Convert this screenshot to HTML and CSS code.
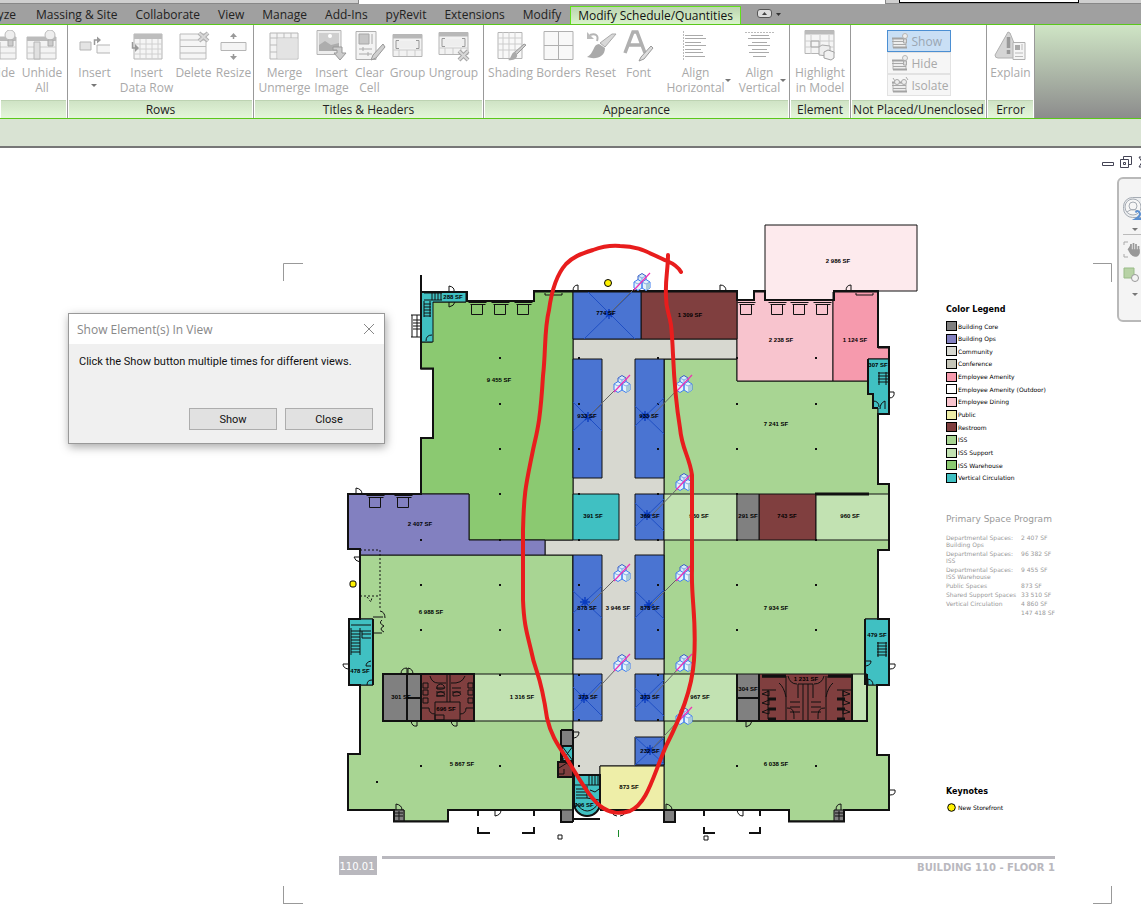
FILE: index.html
```html
<!DOCTYPE html>
<html lang="en">
<head>
<meta charset="utf-8">
<meta name="viewport" content="width=device-width, initial-scale=1">
<title>Modify Schedule/Quantities</title>
<link rel="stylesheet" href="styles.css">
</head>
<body>
<div class="app">
  <header class="ribbon">
    <div class="titlebar"><span class="title-left"></span><span class="title-mid"></span><span class="title-right"><input class="search" type="text" aria-label="Search"></span></div>
    <nav class="tabs">
      <a class="tab tab-cut" href="#">Analyze</a>
      <a class="tab" href="#">Massing &amp; Site</a>
      <a class="tab" href="#">Collaborate</a>
      <a class="tab" href="#">View</a>
      <a class="tab" href="#">Manage</a>
      <a class="tab" href="#">Add-Ins</a>
      <a class="tab" href="#">pyRevit</a>
      <a class="tab" href="#">Extensions</a>
      <a class="tab" href="#">Modify</a>
      <a class="tab active" href="#">Modify Schedule/Quantities</a>
      <button class="collapse" type="button" aria-label="Minimize ribbon">
        <svg width="26" height="10" viewBox="0 0 26 10"><rect x=".5" y=".5" width="14" height="8" rx="2.5" fill="#ddd" stroke="#555"/><path d="M5 6l2.500-3 2.500 3z" fill="#444"/><path d="M19 4h5l-2.500 3z" fill="#333"/></svg>
      </button>
    </nav>
    <div class="panels">
      <section class="panel p-columns">
        <div class="tools">
          <button class="tool" type="button"><svg class="ico" viewBox="0 0 32 32"><use href="#i-unhide"/></svg><span>Hide</span></button>
          <button class="tool" type="button"><svg class="ico" viewBox="0 0 32 32"><use href="#i-unhide"/></svg><span>Unhide<br>All</span></button>
        </div>
        <h2>&nbsp;</h2>
      </section>
      <section class="panel p-rows">
        <div class="tools">
          <button class="tool" type="button"><svg class="ico" viewBox="0 0 32 32"><path d="M1 12h11v8H1z" fill="#e4e4e4" stroke="#b5b5b5"/><path d="M31 15H18v8h13" fill="#f6f6f6" stroke="#b5b5b5"/><path d="M15.500 15v-5h4" fill="none" stroke="#999" stroke-width="1.500"/><path d="M18 6.500l4 3.500-4 3.500z" fill="#999"/></svg><span>Insert<i class="caret"></i></span></button>
          <button class="tool" type="button"><svg class="ico" viewBox="0 0 32 32"><path d="M3 4h28v25H3z" fill="#f5f5f5" stroke="#b5b5b5"/><path d="M3 4h28v5H3z" fill="#bdbdbd"/><path d="M9 9v20M15 9v20M21 9v20M27 9v20M3 14h28M3 19h28M3 24h28" stroke="#d0d0d0"/><path d="M1.500 12v6H5" fill="none" stroke="#999" stroke-width="1.500"/><path d="M4 14l4 4-4 4z" fill="#999"/></svg><span>Insert<br>Data Row</span></button>
          <button class="tool" type="button"><svg class="ico" viewBox="0 0 32 32"><path d="M2 4h26v25H2z" fill="#f5f5f5" stroke="#bbb"/><path d="M2 10h26M2 16.500h26M2 23h26" stroke="#bbb"/><path d="M21 3l9 8M30 3l-9 8" stroke="#b0b0b0" stroke-width="4"/><path d="M21 3l9 8M30 3l-9 8" stroke="#d8d8d8" stroke-width="2"/></svg><span>Delete</span></button>
          <button class="tool" type="button"><svg class="ico" viewBox="0 0 32 32"><path d="M3 12.500h25v8H3z" fill="#f4f4f4" stroke="#b5b5b5"/><path d="M15.500 9V5M15.500 24v4" stroke="#999" stroke-width="1.500"/><path d="M12 7l3.500-4L19 7zM12 26l3.500 4 3.500-4z" fill="#999"/></svg><span>Resize</span></button>
        </div>
        <h2>Rows</h2>
      </section>
      <section class="panel p-titles">
        <div class="tools">
          <button class="tool" type="button"><svg class="ico" viewBox="0 0 32 32"><path d="M1 3h28v26H1z" fill="#f3f3f3" stroke="#b5b5b5"/><path d="M8 3v26M1 8h28M15 3v5M22 3v5M1 15h7M1 22h7" stroke="#bbb"/><path d="M8.500 8.500h20v20h-20z" fill="#e3e3e3"/></svg><span>Merge<br>Unmerge</span></button>
          <button class="tool" type="button"><svg class="ico" viewBox="0 0 32 32"><path d="M1 .5h24v24H1z" fill="#eee" stroke="#b5b5b5"/><path d="M3 3h20v12H3z" fill="#cfcfcf"/><circle cx="14" cy="6" r="2" fill="#fff"/><path d="M3 15l6-4 6 4 8-2v8H3z" fill="#adadad"/><path d="M17 17h9v6h4l-6 7-6-7h3v-3h-4z" fill="#ccc" stroke="#999"/></svg><span>Insert<br>Image</span></button>
          <button class="tool" type="button"><svg class="ico" viewBox="0 0 32 32"><path d="M2 1.500h20v28H2z" fill="#f3f3f3" stroke="#b0b0b0"/><path d="M5 4h10v10H5z" fill="#c6c6c6" stroke="#a8a8a8"/><path d="M18 4v10M5 19h13M5 24h13M9 17v4M14 22v4" stroke="#aaa"/><path d="M29 14l-10 11-2 5 5-2 9-11z" fill="#d0d0d0" stroke="#999"/></svg><span>Clear<br>Cell</span></button>
          <button class="tool" type="button"><svg class="ico" viewBox="0 0 32 32"><use href="#i-group"/></svg><span>Group</span></button>
          <button class="tool" type="button"><svg class="ico" viewBox="0 0 32 32"><use href="#i-group" transform="translate(0 -2)"/><path d="M21 21l9 9M30 21l-9 9" stroke="#a5a5a5" stroke-width="4"/><path d="M21 21l9 9M30 21l-9 9" stroke="#d8d8d8" stroke-width="2"/></svg><span>Ungroup</span></button>
        </div>
        <h2>Titles &amp; Headers</h2>
      </section>
      <section class="panel p-look">
        <div class="tools">
          <button class="tool" type="button"><svg class="ico" viewBox="0 0 32 32"><path d="M3 2.500h24v26H3z" fill="#f8f8f8" stroke="#b5b5b5"/><path d="M8 2v26M14 2v26M20 2v26M3 8h24M3 14h24M3 20h24" stroke="#ccc"/><path d="M31 15L21 25l-2-2 10-9z" fill="#ccc" stroke="#999"/><path d="M20 22c-4 0-3 6-7 8 6 1 10-2 9-6z" fill="#aaa"/></svg><span>Shading</span></button>
          <button class="tool" type="button"><svg class="ico" viewBox="0 0 32 32"><path d="M1 1.500h29v28H1zM15.500 1.500v28M1 15.500h29" fill="#f8f8f8" stroke="#b0b0b0"/></svg><span>Borders</span></button>
          <button class="tool" type="button"><svg class="ico" viewBox="0 0 32 32"><path d="M31 4L20 17l-5-4L27 4z" fill="#d8d8d8" stroke="#aaa"/><path d="M14 14c-6 0-5 10-12 13 9 3 18 0 18-9z" fill="#aaa"/><path d="M5 5c5-2 9 0 7 6" fill="none" stroke="#b5b5b5" stroke-width="2"/><path d="M2 2v7h7z" fill="#bbb"/></svg><span>Reset</span></button>
          <button class="tool" type="button"><svg class="ico" viewBox="0 0 32 32"><path d="M2 23L10 2h4l8 21M6 15h12" fill="none" stroke="#b0b0b0" stroke-width="3.500"/><path d="M28 16L18 27l-2 4 5-2 9-11z" fill="#ddd" stroke="#999"/></svg><span>Font</span></button>
          <button class="tool" type="button"><svg class="ico" viewBox="0 0 32 32"><path d="M3.500 1v29" stroke="#bbb" stroke-dasharray="2 1"/><path d="M5 5.500h18M5 8.500h21M5 12.500h16M5 15.500h21M5 19.500h16M5 22.500h18M5 26.500h20" stroke="#aaa"/></svg><span>Align<br>Horizontal<i class="caret side"></i></span></button>
          <button class="tool" type="button"><svg class="ico" viewBox="0 0 32 32"><path d="M1 2.500h29" stroke="#bbb" stroke-dasharray="2 1"/><path d="M7 5.500h18M4 8.500h22M8 12.500h15M4 15.500h22M8 19.500h15M5 22.500h20M9 26.500h13" stroke="#aaa"/></svg><span>Align<br>Vertical<i class="caret side"></i></span></button>
        </div>
        <h2>Appearance</h2>
      </section>
      <section class="panel p-element">
        <div class="tools">
          <button class="tool" type="button"><svg class="ico" viewBox="0 0 32 32"><path d="M1 .5h29v23H1z" fill="#f5f5f5" stroke="#b5b5b5"/><path d="M1 .5h29v4H1z" fill="#bbb"/><path d="M7 5v19M16 5v19M25 5v19M1 11h29M1 17h29" stroke="#ccc"/><path d="M7 11h8v6H7z" fill="none" stroke="#aaa"/><path d="M15 17l3-2 8 1v8l-3 2-8-1z" fill="#eee" stroke="#aaa"/><path d="M20 22l4-2 6 2v6l-3 2-7-2z" fill="#f2f2f2" stroke="#a0a0a0"/></svg><span>Highlight<br>in Model</span></button>
        </div>
        <h2>Element</h2>
      </section>
      <section class="panel p-placed">
        <div class="stack">
          <button class="mini on" type="button"><svg width="18" height="16" viewBox="0 0 18 16"><use href="#i-mini"/><use href="#i-bulb"/></svg>Show</button>
          <button class="mini" type="button"><svg width="18" height="16" viewBox="0 0 18 16"><use href="#i-mini"/><use href="#i-bulb"/></svg>Hide</button>
          <button class="mini" type="button"><svg width="18" height="16" viewBox="0 0 18 16"><use href="#i-mini"/><path d="M2 1l2 3M15 0l2 3" stroke="#aaa"/><circle cx="6" cy="5" r="2.500" fill="#eee" stroke="#aaa"/><circle cx="13" cy="5" r="2.500" fill="#eee" stroke="#aaa"/></svg>Isolate</button>
        </div>
        <h2>Not Placed/Unenclosed</h2>
      </section>
      <section class="panel p-error">
        <div class="tools">
          <button class="tool" type="button"><svg class="ico" viewBox="0 0 32 32"><path d="M14 2L1 25q0 3 3 3h22L16 3z" fill="#d5d5d5" stroke="#b0b0b0"/><path d="M14.500 7v11M14.500 20v4" stroke="#999" stroke-width="3.500"/><path d="M19 12.500h12v17H19z" fill="#f5f5f5" stroke="#b0b0b0"/><path d="M21 15h5v5h-5z" fill="#aaa"/><path d="M28 14v6M21 23h8M21 26.500h8" stroke="#bbb"/></svg><span>Explain</span></button>
        </div>
        <h2>Error</h2>
      </section>
    </div>
    <div class="options"></div>
  </header>

  <main class="canvas">
    <svg class="plan" width="1141" height="765" viewBox="0 148 1141 765" role="img" aria-label="Building 110 floor 1 plan">
      <defs>
        <g id="i-unhide"><path d="M1 7h29v22H1z" fill="#f3f3f3" stroke="#bbb"/><path d="M1 7h29v4H1z" fill="#bbb"/><path d="M1 17h29M1 23h29" stroke="#ccc"/><path d="M8 12h6v17H8z" fill="#e0e0e0" stroke="#b5b5b5"/><circle cx="24" cy="5" r="5" fill="#eee" stroke="#bbb"/><path d="M22 10h5v6h-5z" fill="#ccc" stroke="#aaa"/></g>
        <g id="i-group"><path d="M1 4.500h29v22H1z" fill="#f2f2f2" stroke="#b5b5b5"/><path d="M1 4.500h29v4H1z" fill="#b8b8b8"/><path d="M7 20v6M15 20v6M23 20v6M1 20h29" stroke="#ccc"/><path d="M4 11h23v7H4z" fill="#eee"/><path d="M7 10.500H4v8h3M24 10.500h3v8h-3" fill="none" stroke="#999"/></g>
        <g id="i-mini"><path d="M2 5.500h13v9H2z" fill="#eee" stroke="#b5b5b5"/><path d="M1 5.500h13M2 14.500h14" stroke="#a3a3a3" stroke-width="2"/><path d="M1 8.500h14M2 11.500h13" stroke="#a8a8a8"/></g>
        <g id="i-bulb"><circle cx="14" cy="3" r="2.500" fill="#eee" stroke="#b5b5b5"/><path d="M12.500 6h3v4h-3z" fill="#ddd" stroke="#aaa"/></g>
        <g id="cubes">
          <path d="M-4-6l4-2.500 4 2.500v5l-4 2-4-2z" fill="#d7ecf7" stroke="#3a5cc4"/><path d="M-8 0l4-2.500L0 0v6l-4 2.500L-8 6zM0 0l4-2.500L8 0v6L4 8.500 0 6z" fill="#e4f3fa" stroke="#3f7df0"/><path d="M4 2.500L8 0v6L4 8.500z" fill="#a8cbd8"/><path d="M-4-6l4 2 4-2M0-4v4M-8 0l4 2 4-2M0 0l4 2 4-2" fill="none" stroke="#5b8be0" stroke-width=".7"/><path d="M-8 8L8-9" stroke="#f02fb4" stroke-width="1.200"/>
        </g>
        <path id="star" d="M-5 0H5M0-5V5M-3-3l6 6M3-3l-6 6" stroke="#0a3cc0" stroke-width="1.400"/>
        <path id="dock" d="M-2.500.5h18M-.5 2.500h15M.5 2.500v10h11v-10" fill="none" stroke="#111" stroke-width="1"/>
      </defs>

      <g class="room">
        <path class="iss" d="M360 555H573V810H448V821H404V810H348V754H360V685H373V619H360z"/>
        <path class="iss" d="M664 359H737V381H868V394H878V484H889V550H878V619H865V685H877V755H889V810H844V821H789V810H664z"/>
        <path class="community" d="M573 339H737V359H664V766H600V775H573V555H545V540H573z"/>
        <path class="warehouse" d="M432 302H466V301H534V292H573V540H469V494H421V438H433V369H421V342H432z"/>
        <path class="ops" d="M348 494H469V540H545V555H360V549H348z"/>
        <path class="vertical" d="M421 292H466V302H433V342H421z"/>
        <path class="outdoor" d="M765 225H917V291H834V300H765z"/>
        <path class="dining" d="M737 300H754V292H765V300H833V381H737z"/>
        <path class="amenity" d="M833 292H878V348H889V359H868V381H833z"/>
        <path class="vertical" d="M868 359H889V414H878V408H873V394H868z"/>
        <path class="restroom" d="M641 292H737V339H641zM759 494H816V540H759zM759 674H852V721H759zM421 674H474V721H421zM558 762H573V777H558z"/>
        <path class="blue" d="M573 292H641V339H573zM573 359H602V478H573zM635 359H664V478H635zM635 494H664V540H635zM573 555H602V659H573zM635 555H664V659H635zM573 674H602V721H573zM635 674H664V721H635zM635 737H664V765H635z"/>
        <path class="vertical" d="M573 494H619V540H573zM349 619H373V685H349zM865 619H889V685H865zM562 746H573V761H562zM574 775H600V803A13 13 0 0 1 574 803z"/>
        <path class="support" d="M664 494H737V540H664zM816 494H889V540H816zM664 674H737V721H664zM852 674H867V721H852zM474 674H573V721H474z"/>
        <path class="core" d="M737 494H759V540H737zM737 674H759V721H737zM383 674H421V721H383zM561 730H573V746H561zM561 810H573V822H561zM664 810H675V822H664zM394 810H404V821H394zM834 810H844V821H834z"/>
        <path class="public" d="M600 766H664V810H600z"/>
      </g>

      <g class="wall">
        <path d="M421 275V368.500H433V438H421V494H348V549H360V619H349V685H360V754H348V810H394V821.500H448V810H561M573 730V822M675 810H789V821.500H844V810H889V755H877V685H889V619H878V550H889V484H878V414H889V347H878V291H834V300H765V291H754V300H737V291H534V301H467V292H421"/>
        <path d="M383 674V721H474V674zM407 674V721M407 698H421M421 674V721M737 674V721H759V674M737 698H759M759 674V721H852V674M558 762H573V777H558zM561 730H573M561 730V762M561 810V822H573M562 746H573V761H562zM664 810H675V822H664zM373 619V685M865 619V685M574 775V803A13 13 0 0 0 600 803V775zM573 819H600M868 359V394H873V408H878M600 810H664M852 721H867V674"/>
        <path d="M815 494H869" stroke-width="3"/>
        <path d="M478 811V816M534 811V816M478 827V833H490M534 827V833H522M704 811V816M760 811V816M704 827V833H715M760 827V833H749"/>
      </g>

      <g class="thin">
        <path d="M562 746l11 15M573 746l-11 15M417 315V337M411 315H421M411 337H421M412 315V337M413 320h8M413 323h8M413 326h8M413 329h8"/>
        <path d="M424 293h18M424 300h18M432 293v7M435 293v7M438 293v7M441 293v7M424 301v16M430 301v16M424 304h7M424 307h7M424 310h7M424 313h7M424 316h7M426 341q0-6 6-6"/>
        <path d="M351 625h20M351 631h20M351 634h9M351 637h9M351 640h9M351 643h9M351 646h9M351 649h9M351 652h9M351 628v27M360 628v27M362 631v7h9M362 634h9M367 685q0-5 5-5M371 661q-5 1-5 5h5"/>
        <path d="M877 643h10M877 646h10M877 649h10M877 652h10M877 655h10M878 642v15M886 642v15M866 661h5q0 4-5 5M868 685v-6q5 1 5 6"/>
        <path d="M878 373h10M878 376h10M878 379h10M878 382h10M879 372v13M886 372v13M873 401q6 0 6 6M880 409q0-6 5-8v8"/>
        <path d="M589 775v10M592 775v10M595 775v10M598 775v10M575 785h24M576 789h11M576 792h11M576 795h11M576 798h11M587 786v12l12 2M576 803q11 16 23 0M590 790l5 2 4-3"/>
        <path d="M395 813h8M395 816h8M399 811v9M835 813h8M835 816h8M839 811v9"/>
        <path d="M423 683h5v5h-5zM423 690h5v5h-5zM423 698h5v5h-5zM468 683h5v5h-5zM468 690h5v5h-5zM468 698h5v5h-5zM447 674v28M450 674v28M435 702h25v18h-25zM435 715h9v5h-9zM430 676q2 7 8 7h8M465 676q-3 8-14 7M436 688h9M436 692h9M436 696h9M452 688h9M452 692h9M422 708h7q0 6 6 6M473 708h-7q0 6-6 6"/>
        <path d="M437 686q4-4 7 0t-7 3zM437 693q4-3 7 0t-7 3zM453 693q4-3 7 0t-7 3z"/>
        <path d="M786 676v44M826 676v44M762 677h24M827 677h24M762 690h14M837 690h14M762 694l7-3v5zM762 703l7-3v5zM762 712l7-3v5zM850 694l-7-3v5zM850 703l-7-3v5zM850 712l-7-3v5zM768 690v29M843 690v29M803 684v36M808 684v36M798 684h15M798 684v14M813 684v14M779 683q5 4 7 14M833 683q-5 4-7 14M790 702h10M790 707h10M790 712h10M811 702h10M811 707h10M811 712h10M788 676q2 8 9 8M824 676q-2 8-10 8M787 708q8-1 7 11M825 708q-8-1-7 11"/>
        <path d="M768 699h8M768 709h8M768 719h8M837 699h8M837 709h8M837 719h8M762 676h24M828 676h24" stroke-width="3"/>
        <path d="M559 768l8-5 5 6M559 774h5v-5"/>
        <path d="M360 550h20v60M360 596h20M367 597l4 5 1-5" stroke-dasharray="2 2"/>
        <path d="M373 633h9M373 617h10M380 611q5 1 5 7M382 620q-4 3 2 6q-6 3 0 6"/>
        <path d="M449 292v-6q6 1 5 6M449 302v5q5-1 6-5M356 494v-6q6 1 6 6M360 557h-6q1 4 6 5M573 291q0-6 5-6v6M720 291v-6q6 0 6 6M846 291q0-6 5-6v6M889 392h5q1 6-5 6M890 664h5q1 5-5 5M890 790h5q1 5-5 5M348 664h-5q0 4 5 5M401 674q0-6 6-6v6M408 674v-6q5 1 5 6M411 721q1 6 6 5v-5M451 721q1 6 6 5v-5M574 732h5q0 5-5 6M495 810v6q6-1 6-6M396 810v-6q6 1 6 6M737 810q1 6 6 6v-6M836 810q0-6 5-6v6M746 721v6q5-1 6-6M666 810v-6q6 1 6 6M612 812q1 4 5 4M625 812q-1 4-5 4"/>
        <path d="M558 835h4v4h-4zM704 836h4v4h-4zM545 293v2h17v-2M856 293v2h17v-2"/>
      </g>
      <g>
        <use href="#dock" x="471" y="302"/><use href="#dock" x="494" y="302"/><use href="#dock" x="517" y="302"/>
        <use href="#dock" x="369" y="495"/><use href="#dock" x="397" y="495"/>
        <use href="#dock" x="740" y="302"/><use href="#dock" x="771" y="302"/><use href="#dock" x="793" y="302"/><use href="#dock" x="816" y="302"/>
      </g>
      <path class="dots" d="M499 358h2M499 404h2M499 449h2M499 494h2M499 540h2M499 585h2M499 630h2M499 675h2M499 766h2M420 540h2M420 585h2M420 630h2M420 766h2M578 358h2M578 404h2M578 449h2M578 494h2M578 540h2M578 585h2M578 630h2M578 675h2M578 720h2M578 766h2M657 358h2M657 404h2M657 449h2M657 494h2M657 540h2M657 585h2M657 630h2M657 675h2M657 720h2M736 358h2M736 404h2M736 449h2M736 494h2M736 540h2M736 585h2M736 630h2M736 766h2M815 358h2M815 404h2M815 449h2M815 540h2M815 585h2M815 630h2M815 766h2M376 782h2"/>

      <path class="cross" d="M588 292L635 339M584 339L632 292M573 402l29 29M573 431l29-27M635 406l29 28M635 426l29-28M635 503l29 28M635 527l29-28M573 591l29 27M573 613l29-27M635 591l29 28M635 618l29-28M573 687l29 29M573 711l29-30M635 688l29 28M635 708l29-28M635 737l29 27M635 765l29-27"/>
      <g><use href="#star" x="609" y="314"/><use href="#star" x="588" y="417"/><use href="#star" x="645" y="416"/><use href="#star" x="647" y="515"/><use href="#star" x="585" y="602"/><use href="#star" x="649" y="605"/><use href="#star" x="584" y="698"/><use href="#star" x="645" y="698"/><use href="#star" x="650" y="750"/></g>
      <path class="leader" d="M609 314L636 287M588 417L616 389M650 418L678 389M652 515L678 488M589 605L616 578M650 606L678 578M590 697L616 669M652 697L678 669M652 749L678 721"/>

      <g class="label">
        <text x="838" y="263">2 986 SF</text><text x="606" y="315">774 SF</text><text x="690" y="317">1 309 SF</text>
        <text x="453" y="299">288 SF</text><text x="499" y="382">9 455 SF</text><text x="781" y="342">2 238 SF</text>
        <text x="855" y="342">1 124 SF</text><text x="878" y="367">307 SF</text><text x="776" y="426">7 241 SF</text>
        <text x="587" y="418">933 SF</text><text x="649" y="418">933 SF</text><text x="420" y="526">2 407 SF</text>
        <text x="593" y="518">391 SF</text><text x="650" y="518">369 SF</text><text x="699" y="518">960 SF</text>
        <text x="748" y="518">291 SF</text><text x="787" y="518">743 SF</text><text x="850" y="518">960 SF</text>
        <text x="431" y="614">6 988 SF</text><text x="587" y="610">878 SF</text><text x="618" y="610">3 946 SF</text>
        <text x="650" y="610">878 SF</text><text x="776" y="610">7 934 SF</text><text x="877" y="637">479 SF</text>
        <text x="360" y="673">478 SF</text><text x="401" y="699">301 SF</text><text x="446" y="711">696 SF</text>
        <text x="522" y="699">1 316 SF</text><text x="588" y="699">373 SF</text><text x="650" y="699">373 SF</text>
        <text x="700" y="699">967 SF</text><text x="748" y="691">304 SF</text><text x="806" y="681">1 231 SF</text>
        <text x="650" y="753">232 SF</text><text x="462" y="766">5 867 SF</text><text x="776" y="766">6 038 SF</text>
        <text x="629" y="789">873 SF</text><text x="584" y="807">996 SF</text>
      </g>

      <g class="key"><circle cx="608" cy="283" r="3.500"/><rect x="350" y="581" width="6" height="6" rx="2"/></g>
      <path d="M618.500 830v7" stroke="#1b8a2a"/>

      <g><use href="#cubes" x="642" y="282"/><use href="#cubes" x="622" y="384"/><use href="#cubes" x="684" y="384"/><use href="#cubes" x="684" y="482"/><use href="#cubes" x="622" y="573"/><use href="#cubes" x="684" y="573"/><use href="#cubes" x="622" y="663"/><use href="#cubes" x="684" y="663"/><use href="#cubes" x="684" y="716"/></g>

      <path class="markup" d="M681 272Q677 265 667 261C648 253 640 246 620 246C608 245 601 247 593 250C580 254 573 257 566 264C557 274 552 288 549 310C544 330 546 350 543 376C540 425 537 431 533 450C526 485 524 490 523 530V600C524 625 527 633 531 650C536 676 540 670 547 718C552 740 562 750 570 764C583 785 592 801 603 808C612 814 620 814 630 811C648 803 653 775 667 744C680 718 692 690 694 660C697 620 691 600 692 570V475C689 455 682 450 680 428C672 380 674 350 671 325C669 312 666 310 666 297C665 280 668 270 668 255"/>

      <path class="corner" d="M303 263.500H283.500V281M1093 263.500H1111.500V282M283.500 886V904M283.500 903.500H303M1111.500 886V903.500H1093"/>
      <path d="M339 856h38v19h-38zM382 856h673v3H382z" fill="#b9b8be"/>
      <text class="sheet-no" x="357" y="870">110.01</text>
      <text class="sheet-name" x="1055" y="871">BUILDING 110 - FLOOR 1</text>
    </svg>

    <aside class="legend">
      <h3>Color Legend</h3>
      <ul>
        <li><i class="sw core"></i>Building Core</li>
        <li><i class="sw ops"></i>Building Ops</li>
        <li><i class="sw community"></i>Community</li>
        <li><i class="sw conference"></i>Conference</li>
        <li><i class="sw amenity"></i>Employee Amenity</li>
        <li><i class="sw"></i>Employee Amenity (Outdoor)</li>
        <li><i class="sw dining"></i>Employee Dining</li>
        <li><i class="sw public"></i>Public</li>
        <li><i class="sw restroom"></i>Restroom</li>
        <li><i class="sw iss"></i>ISS</li>
        <li><i class="sw support"></i>ISS Support</li>
        <li><i class="sw warehouse"></i>ISS Warehouse</li>
        <li><i class="sw vertical"></i>Vertical Circulation</li>
      </ul>
    </aside>

    <aside class="program">
      <h3>Primary Space Program</h3>
      <table>
        <tr><td>Departmental Spaces:<br>Building Ops</td><td>2 407 SF</td></tr>
        <tr><td>Departmental Spaces:<br>ISS</td><td>96 382 SF</td></tr>
        <tr><td>Departmental Spaces:<br>ISS Warehouse</td><td>9 455 SF</td></tr>
        <tr><td>Public Spaces</td><td>873 SF</td></tr>
        <tr><td>Shared Support Spaces</td><td>33 510 SF</td></tr>
        <tr><td>Vertical Circulation</td><td>4 860 SF</td></tr>
        <tr><td></td><td>147 418 SF</td></tr>
      </table>
    </aside>

    <aside class="keynotes">
      <h3>Keynotes</h3>
      <p><svg width="9" height="9" viewBox="0 0 9 9"><circle cx="4.500" cy="4.500" r="3.800" fill="#fff200" stroke="#000"/></svg>New Storefront</p>
    </aside>

    <div class="mdi">
      <button type="button" aria-label="Minimize"><svg width="12" height="12" viewBox="0 0 12 12"><path d="M.5 6.500h11v3H.5z" fill="#fff" stroke="#445"/></svg></button>
      <button type="button" aria-label="Restore"><svg width="12" height="12" viewBox="0 0 12 12"><path d="M3.500 3V.5h8v8H9M.5 3.500h8v8h-8zM3.500 6.500h2v2h-2z" fill="#fff" stroke="#445"/></svg></button>
      <button type="button" aria-label="Close"><svg width="12" height="12" viewBox="0 0 12 12"><path d="M1 1h3l2 3 2-3h3L8 6l3 5H8L6 8l-2 3H1l3-5z" fill="#fff" stroke="#445"/></svg></button>
    </div>

    <div class="navbar">
      <button type="button" aria-label="Steering wheel"><svg width="36" height="24" viewBox="0 0 36 24"><rect x=".5" y=".5" width="40" height="20" rx="9" fill="#eceef0" stroke="#a6acb4"/><circle cx="10" cy="10" r="8" fill="#f6f6f6" stroke="#a6acb4"/><circle cx="10" cy="9" r="4" fill="none" stroke="#a6acb4"/><path d="M4 15q6-5 12 0" fill="none" stroke="#a6acb4"/><path d="M12.500 15.500q2-3 4 0t-4 6.500h6" fill="none" stroke="#5b8fd0" stroke-width="2"/></svg></button>
      <i class="caret nav"></i>
      <hr>
      <button type="button" aria-label="Pan"><svg width="20" height="18" viewBox="0 0 20 18"><path d="M1 4V1h4M1 13v3h4" fill="none" stroke="#aaa"/><path d="M5 8l3 2V3M10.500 9V2M13 9V3M15.500 10V5M8 9h8v3q-1 3-4 3t-6-6" fill="#999" stroke="#999" stroke-width="1.700"/></svg></button>
      <button type="button" aria-label="Zoom region"><svg width="20" height="18" viewBox="0 0 20 18"><path d="M1 1h10v10H1z" fill="#b7d2a5" stroke="#99bb88"/><circle cx="12" cy="11" r="3.500" fill="#f4f4f4" stroke="#999"/></svg></button>
      <i class="caret nav"></i>
    </div>

    <div class="dialog" role="dialog" aria-labelledby="dlg-title">
      <div class="dialog-head"><h1 id="dlg-title">Show Element(s) In View</h1><button class="x" type="button" aria-label="Close dialog"><svg width="12" height="12" viewBox="0 0 12 12"><path d="M1 1l10 10M11 1L1 11" stroke="#888"/></svg></button></div>
      <p>Click the Show button multiple times for different views.</p>
      <div class="actions"><button type="button">Show</button><button type="button">Close</button></div>
    </div>
  </main>
</div>
</body>
</html>
```
FILE: styles.css
```css
* { box-sizing: border-box; }
body { margin: 0; font-family: "Open Sans", "Noto Sans", sans-serif; font-size: 12px; background: #fff; color: #222; }
h1, h2, h3, p, ul { margin: 0; padding: 0; font-weight: normal; }
ul { list-style: none; }
button { font: inherit; margin: 0; padding: 0; border: 0; background: none; color: inherit; }
.app { display: flex; flex-direction: column; height: 100vh; overflow: hidden; }

/* Ribbon */
.ribbon { flex: none; overflow: hidden; }
.titlebar { display: flex; height: 4px; }
.title-left { width: 359px; background: #cfcfcf; border-bottom: 1px solid #888; border-right: 1px solid #888; }
.title-mid { width: 526px; }
.title-right { flex: 1; display: flex; background: #cfcfcf; border-bottom: 1px solid #888; border-left: 1px solid #888; padding-left: 13px; }
.search { width: 180px; height: 3px; padding: 0; border: 1px solid #000; border-top: 0; background: #fff; }
.tabs { display: flex; align-items: flex-end; height: 21px; background: #a0a0a0; border-bottom: 1px solid #5ac81a; white-space: nowrap; }
.tab { color: #222; text-decoration: none; line-height: 17px; padding: 0 9px 1px; }
.tab-cut { width: 27px; padding-right: 11px; display: flex; justify-content: flex-end; }
.tab.active { padding: 0 7px; border: 1px solid #62e01c; border-bottom: 0; background: linear-gradient(#bcd4b0, #d9f3cb); color: #111; }
.collapse { align-self: center; height: 10px; margin-left: 16px; display: flex; }
.panels { display: flex; height: 93px; background: linear-gradient(#cfe5c5, #8c8c8c); }
.panel { flex: none; display: flex; flex-direction: column; border-right: 1px solid #999; background: #fff; }
.panel h2 { height: 18px; margin: 0 1px; border-top: 1px solid #bdd3b2; background: linear-gradient(#cfe3c5, #e4f6da); font-size: 12px; line-height: 17px; text-align: center; color: #222; white-space: nowrap; }
.tools { flex: 1; display: grid; justify-content: center; padding-top: 5px; }
.tool { display: flex; flex-direction: column; align-items: center; justify-content: flex-start; gap: 3px; color: #a9a9a9; line-height: 15px; white-space: nowrap; }
.tool span { position: relative; text-align: center; }
.ico { width: 32px; height: 32px; flex: none; }
.caret { display: block; width: 0; margin: 4px auto 0; border: 3px solid transparent; border-top: 3px solid #777; border-bottom: 0; }
.caret.side { position: absolute; right: -6px; top: 10px; }
.p-columns { width: 68px; }
.p-columns .tools { grid-template-columns: 30px 50px; justify-content: end; }
.p-rows { width: 186px; }
.p-rows .tools { grid-template-columns: 52px 52px 42px 38px; }
.p-titles { width: 230px; }
.p-titles .tools { grid-template-columns: 54px 40px 36px 40px 52px; }
.p-look { width: 306px; }
.p-look .tools { grid-template-columns: 48px 48px 36px 40px 74px 54px; }
.p-element { width: 61px; }
.p-placed { width: 136px; }
.p-error { width: 48px; }
.stack { flex: 1; display: flex; flex-direction: column; align-items: center; padding-top: 5px; }
.mini { display: flex; align-items: center; gap: 3px; width: 64px; height: 22px; padding-left: 3px; border: 1px solid #e2e2e2; background: #f6f6f6; color: #a9a9a9; }
.mini.on { border-color: #4b8fd3; background: #c9dff5; color: #9aa6b2; }
.options { height: 30px; background: #d9e3d3; border-top: 1px solid #5ac81a; border-bottom: 2px solid #777; }

/* Drawing area */
.canvas { position: relative; flex: 1; overflow: hidden; background: #fff; }
.plan { display: block; }
.iss { fill: #a8d593; background: #a8d593; }
.warehouse { fill: #8bc971; background: #8bc971; }
.community { fill: #d7d8d0; background: #d7d8d0; }
.conference { background: #c5c5b8; }
.ops { fill: #8280c0; background: #8280c0; }
.vertical { fill: #40c0c2; background: #40c0c2; }
.outdoor { fill: #fdeaed; }
.dining { fill: #f8c4ce; background: #f8c4ce; }
.amenity { fill: #f69aad; background: #f69aad; }
.restroom { fill: #803f3f; background: #803f3f; }
.support { fill: #c2e2b2; background: #c2e2b2; }
.core { fill: #808080; background: #808080; }
.public { fill: #eeeea8; background: #eeeea8; }
.blue { fill: #4a74d2; }
.room path { stroke: #111; stroke-width: 1; }
.wall path { fill: none; stroke: #111; stroke-width: 2; }
.wall path[stroke-width] { stroke-width: 3; }
.thin path { fill: none; stroke: #111; stroke-width: 1; }
.thin path[stroke-width] { stroke-width: 3; }
.dots { stroke: #111; stroke-width: 2; }
.cross { fill: none; stroke: #1f4fc4; stroke-width: 1; }
.leader { fill: none; stroke: #666; stroke-width: 1; }
.label text { font: bold 6px "Liberation Sans", sans-serif; text-anchor: middle; fill: #000; }
.key circle, .key rect { fill: #fff200; stroke: #000; }
.markup { fill: none; stroke: #e81d1d; stroke-width: 4; stroke-linecap: round; stroke-linejoin: round; }
.corner { fill: none; stroke: #999; }
.sheet-no { font: 10px "DejaVu Sans", sans-serif; text-anchor: middle; fill: #fff; }
.sheet-name { font: bold 10px "DejaVu Sans", sans-serif; text-anchor: end; fill: #b9b8be; }

.legend, .program, .keynotes { position: absolute; left: 946px; font-family: "DejaVu Sans", sans-serif; font-size: 6px; line-height: 7px; color: #000; white-space: nowrap; }
.legend h3, .keynotes h3 { font-size: 8px; line-height: 10px; font-weight: bold; }
.legend { top: 157px; }
.legend ul { display: flex; flex-direction: column; justify-content: space-between; height: 162px; margin-top: 6px; }
.legend li { display: flex; align-items: center; gap: 1px; }
.sw { width: 11px; height: 10px; border: 1px solid #000; }
.program { top: 366px; color: #999; }
.program h3 { font-size: 9px; line-height: 10px; margin-bottom: 10px; }
.program table { border-collapse: collapse; }
.program td { padding: 0 5px 2px 0; vertical-align: top; }
.keynotes { top: 639px; }
.keynotes p { display: flex; align-items: center; gap: 2px; padding: 6px 0 0 1px; }

.mdi { position: absolute; left: 1102px; top: 8px; display: flex; gap: 6px; }
.mdi button { display: flex; }
.navbar { position: absolute; left: 1117px; top: 29px; width: 48px; height: 145px; padding: 18px 4px 0; border: 2px solid #b9b9b9; border-radius: 6px; background: #f4f4f4; display: flex; flex-direction: column; align-items: flex-start; }
.navbar button { display: flex; margin-bottom: 8px; }
.navbar button:first-child { margin-bottom: 7px; }
.navbar hr { width: 40px; margin: 3px 0 6px; border: 0; border-top: 1px solid #bbb; }
.caret.nav { margin: 0 0 0 9px; }

/* Dialog */
.dialog { position: absolute; left: 68px; top: 165px; width: 317px; border: 1px solid #999; background: #f0f0f0; box-shadow: 1px 3px 9px rgba(0, 0, 0, .35); color: #111; }
.dialog-head { display: flex; align-items: center; justify-content: space-between; height: 30px; padding: 0 9px 0 8px; background: #fff; }
.dialog h1 { font-size: 12px; color: #888; }
.x { display: flex; }
.dialog p { padding: 9px 10px 0; font-family: Roboto, sans-serif; font-size: 11px; line-height: 17px; }
.actions { display: flex; justify-content: flex-end; gap: 8px; padding: 38px 11px 13px; }
.actions button { width: 88px; height: 22px; border: 1px solid #adadad; background: #e1e1e1; font-family: Roboto, sans-serif; font-size: 11px; }
```
